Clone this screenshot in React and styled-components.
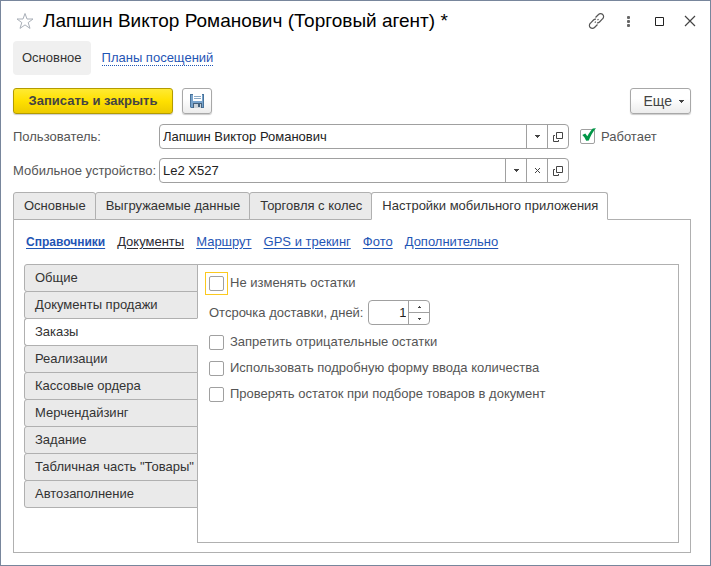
import React, { useState } from "react";
import styled, { createGlobalStyle, css } from "styled-components";

const GlobalStyle = createGlobalStyle`
  * {
    box-sizing: border-box;
  }

  body {
    margin: 0;
    background-color: #fff;
    color: #333;
    font-family: "Liberation Sans", Arial, sans-serif;
    font-size: 13px;
    line-height: 16px;
  }

  button, input {
    font: inherit;
    color: inherit;
    margin: 0;
  }
`;

const pageTabs = ["Основные", "Выгружаемые данные", "Торговля с колес", "Настройки мобильного приложения"];

const sectionLinks = ["Справочники", "Документы", "Маршрут", "GPS и трекинг", "Фото", "Дополнительно"];

const sideTabs = [
  "Общие",
  "Документы продажи",
  "Заказы",
  "Реализации",
  "Кассовые ордера",
  "Мерчендайзинг",
  "Задание",
  'Табличная часть "Товары"',
  "Автозаполнение",
];

const OpenIcon = () => (
  <svg width="10" height="10" viewBox="0 0 10 10" fill="none" stroke="#444" aria-hidden="true">
    <path d="M3.5 .5h6v6h-6zM2 3.5H.5v6h5V8" />
  </svg>
);

const ArrowIcon = () => (
  <svg width="5" height="3" viewBox="0 0 5 3" fill="#444" aria-hidden="true">
    <path d="M0 0h5v1H4v1H3v1H2V2H1V1H0z" />
  </svg>
);

const Check = ({ label, defaultChecked, focused }) => (
  <CheckLabel>
    <CheckFrame $focused={focused}>
      <CheckInput type="checkbox" defaultChecked={defaultChecked} />
      <svg width="15" height="15" viewBox="0 0 15 15" fill="#009646" aria-hidden="true">
        <path d="M2.300 6L5.300 4.500L7.300 7.200C9 4 11 1.500 12.800 -.5L16 -.8C12.800 2.500 10.500 7 8.800 11.500L6.200 11.800C5.200 9.500 4 7.500 2.300 6z" />
      </svg>
    </CheckFrame>
    {label}
  </CheckLabel>
);

const App = () => {
  const [days, setDays] = useState(1);
  const [page, setPage] = useState(3);
  const [side, setSide] = useState(2);

  return (
    <>
      <GlobalStyle />
      <Window>
        <TitleBar>
          <IconButton aria-label="В избранное">
            <svg width="18" height="18" viewBox="0 0 18 18" fill="none" stroke="#a9afb8">
              <path d="M9 1.500l2 5.500h6l-4.800 3.600 1.800 5.800-5-3.500-5 3.500 1.800-5.800L1 7h6z" />
            </svg>
          </IconButton>
          <Title>Лапшин Виктор Романович (Торговый агент) *</Title>
          <WindowButtons>
            <IconButton aria-label="Ссылка">
              <svg width="18" height="18" viewBox="0 0 18 18" fill="none" stroke="#555" strokeWidth="1.2">
                <path d="M7.500 5.500L10.500 2.500a2.900 2.900 0 0 1 4.200 0 2.900 2.900 0 0 1 0 4.200L11.500 10a2.900 2.900 0 0 1-2.500.8M9.500 12.500l-3 3a2.900 2.900 0 0 1-4.200 0 2.900 2.900 0 0 1 0-4.200L5.500 8a2.900 2.900 0 0 1 2.500-.8M6.800 10.700l1-1M9.500 8.200l1-1" />
              </svg>
            </IconButton>
            <IconButton aria-label="Меню">
              <svg width="18" height="18" viewBox="0 0 18 18" fill="#666">
                <rect x="8" y="4" width="3" height="3" rx="1" />
                <rect x="8" y="8" width="3" height="3" rx="1" />
                <rect x="8" y="12" width="3" height="3" rx="1" />
              </svg>
            </IconButton>
            <IconButton aria-label="Развернуть">
              <svg width="18" height="18" viewBox="0 0 18 18" fill="none" stroke="#222">
                <path d="M5.500 5.500h8v8h-8z" />
              </svg>
            </IconButton>
            <IconButton aria-label="Закрыть">
              <svg width="18" height="18" viewBox="0 0 18 18" fill="none" stroke="#444" strokeWidth="1.2">
                <path d="M4 4l10 10M14 4L4 14" />
              </svg>
            </IconButton>
          </WindowButtons>
        </TitleBar>

        <Body>
          <Nav>
            <NavCurrent href="#main">Основное</NavCurrent>
            <NavLink href="#plans">Планы посещений</NavLink>
          </Nav>

          <Commands>
            <PrimaryButton>Записать и закрыть</PrimaryButton>
            <SaveButton aria-label="Записать">
              <svg width="14" height="14" viewBox="0 0 14 14">
                <path d="M0 0h14v14H1l-1-1z" fill="#48749c" />
                <path d="M1 1h12v12H1z" fill="#78a3cc" />
                <path d="M3 0h9v7H3z" fill="#fff" />
                <path d="M4 2h7v1H4zM4 4h7v1H4z" fill="#8ba9c4" />
                <path d="M3 9h9v5H3z" fill="#44617c" />
                <path d="M4 10h7v4H4z" fill="#cbd3da" />
                <path d="M8 10h2v3H8z" fill="#44617c" />
              </svg>
            </SaveButton>
            <MoreButton>
              Еще <ArrowIcon />
            </MoreButton>
          </Commands>

          <Form>
            <label htmlFor="user">Пользователь:</label>
            <Field>
              <FieldInput id="user" defaultValue="Лапшин Виктор Романович" />
              <FieldButton aria-label="Выбрать"><ArrowIcon /></FieldButton>
              <FieldButton aria-label="Открыть"><OpenIcon /></FieldButton>
            </Field>
            <Check label="Работает" defaultChecked />

            <label htmlFor="device">Мобильное устройство:</label>
            <Field>
              <FieldInput id="device" defaultValue="Le2 X527" />
              <FieldButton aria-label="Выбрать"><ArrowIcon /></FieldButton>
              <FieldButton aria-label="Очистить">
                <svg width="5" height="5" viewBox="0 0 5 5" stroke="#444">
                  <path d="M0 0l5 5M5 0L0 5" />
                </svg>
              </FieldButton>
              <FieldButton aria-label="Открыть"><OpenIcon /></FieldButton>
            </Field>
          </Form>

          <Tabs role="tablist">
            {pageTabs.map((name, i) => (
              <Tab key={name} role="tab" aria-selected={i === page} $active={i === page} onClick={() => setPage(i)}>
                {name}
              </Tab>
            ))}
          </Tabs>

          <Panel>
            <Sections>
              {sectionLinks.map((name, i) => (
                <SectionLink key={name} href={`#section-${i}`} $current={i === 0} $dark={i === 1}>
                  {name}
                </SectionLink>
              ))}
            </Sections>

            <Split>
              <SideTabs role="tablist" aria-orientation="vertical">
                {sideTabs.map((name, i) => (
                  <SideTab key={name} role="tab" aria-selected={i === side} $active={i === side} onClick={() => setSide(i)}>
                    {name}
                  </SideTab>
                ))}
              </SideTabs>

              <Settings>
                <Check label="Не изменять остатки" focused />
                <DaysRow>
                  <label htmlFor="days">Отсрочка доставки, дней:</label>
                  <Spinner>
                    <SpinnerInput
                      id="days"
                      inputMode="numeric"
                      value={days}
                      onChange={(e) => setDays(Number(e.target.value) || 0)}
                    />
                    <SpinnerButtons>
                      <SpinnerButton aria-label="Больше" onClick={() => setDays(days + 1)}>
                        <svg width="3" height="2" viewBox="0 0 3 2" fill="#444"><path d="M1 0h1v1h1v1H0V1h1z" /></svg>
                      </SpinnerButton>
                      <SpinnerButton aria-label="Меньше" onClick={() => setDays(Math.max(0, days - 1))}>
                        <svg width="3" height="2" viewBox="0 0 3 2" fill="#444"><path d="M0 0h3v1H2v1H1V1H0z" /></svg>
                      </SpinnerButton>
                    </SpinnerButtons>
                  </Spinner>
                </DaysRow>
                <CheckList>
                  <Check label="Запретить отрицательные остатки" />
                  <Check label="Использовать подробную форму ввода количества" />
                  <Check label="Проверять остаток при подборе товаров в документ" />
                </CheckList>
              </Settings>
            </Split>
          </Panel>
        </Body>
      </Window>
    </>
  );
};

const Window = styled.main`
  display: flex;
  flex-direction: column;
  min-height: 100vh;
  border: 1px solid #78869c;
`;

const TitleBar = styled.header`
  display: flex;
  align-items: center;
  height: 40px;
  padding: 0 11px 0 15px;
`;

const Title = styled.h1`
  flex: 1;
  margin: 0 0 0 9px;
  color: #000;
  font-size: 19px;
  font-weight: normal;
  line-height: 24px;
  white-space: nowrap;
`;

const WindowButtons = styled.div`
  display: flex;
  gap: 13px;
`;

const IconButton = styled.button`
  display: flex;
  padding: 0;
  border: 0;
  background: none;
`;

const Body = styled.div`
  display: flex;
  flex: 1;
  flex-direction: column;
  padding: 0 19px 12px 12px;
`;

const Nav = styled.nav`
  display: flex;
  align-items: center;
  gap: 11px;
`;

const NavCurrent = styled.a`
  padding: 9px;
  border-radius: 4px;
  background-color: #f0f0f0;
  color: #333;
  text-decoration: none;
`;

const NavLink = styled.a`
  border-bottom: 1px dotted #1f55b5;
  color: #1f55b5;
  line-height: 14px;
  text-decoration: none;
`;

const Commands = styled.div`
  display: flex;
  margin-top: 13px;
`;

const buttonBase = css`
  display: flex;
  align-items: center;
  justify-content: center;
  height: 26px;
  border: 1px solid #a8a8a8;
  border-radius: 3px;
  background: linear-gradient(#fff 40%, #ececec);
  box-shadow: 0 1px 1px #ccc;
  color: #444;
`;

const PrimaryButton = styled.button`
  ${buttonBase}
  min-width: 160px;
  padding: 0 12px;
  border-color: #b39b00;
  background: linear-gradient(#ffea33, #ffe000 50%, #edcb00);
  font-weight: bold;
`;

const SaveButton = styled.button`
  ${buttonBase}
  width: 30px;
  margin-left: 9px;
  padding: 0;
`;

const MoreButton = styled.button`
  ${buttonBase}
  gap: 7px;
  margin-left: auto;
  padding: 0 6px 0 13px;
  font-size: 14px;
`;

const Form = styled.div`
  display: grid;
  grid-template-columns: 146px minmax(0, 410px) auto;
  justify-content: start;
  align-items: center;
  row-gap: 9px;
  margin-top: 10px;
  color: #555;
  white-space: nowrap;

  > label:nth-child(3) {
    margin-left: 11px;
  }
`;

const Field = styled.div`
  display: flex;
  height: 25px;
  overflow: hidden;
  border: 1px solid #a0a0a0;
  border-radius: 4px;
`;

const FieldInput = styled.input`
  flex: 1;
  min-width: 0;
  padding: 0 3px;
  border: 0;
  outline: 0;
  background: none;
  color: #222;
`;

const FieldButton = styled.button`
  display: flex;
  align-items: center;
  justify-content: center;
  width: 21px;
  padding: 0;
  border: 0;
  border-left: 1px solid #a0a0a0;
  background: none;
`;

const CheckLabel = styled.label`
  display: flex;
  align-items: center;
  gap: 6px;
`;

const CheckFrame = styled.span`
  position: relative;
  display: flex;
  outline: ${({ $focused }) => ($focused ? "1px solid #fbc91f" : "none")};
  outline-offset: 3px;

  svg {
    position: absolute;
    inset: 0;
    overflow: visible;
    visibility: hidden;
    pointer-events: none;
  }

  input:checked + svg {
    visibility: visible;
  }
`;

const CheckInput = styled.input`
  width: 15px;
  height: 15px;
  border: 1px solid #a0a0a0;
  border-radius: 2px;
  outline: 0;
  background-color: #fff;
  appearance: none;
`;

const Tabs = styled.div`
  display: flex;
  margin-top: 9px;
`;

const Tab = styled.button`
  height: 28px;
  margin-bottom: -1px;
  padding: 0 9px 0 10px;
  border: 1px solid #b0b0b0;
  border-bottom-color: ${({ $active }) => ($active ? "#fff" : "#b0b0b0")};
  border-radius: 3px 3px 0 0;
  background-color: ${({ $active }) => ($active ? "#fff" : "#eaeaea")};
  white-space: nowrap;
  z-index: 1;

  & + & {
    margin-left: -1px;
  }
`;

const Panel = styled.section`
  display: flex;
  flex: 1;
  flex-direction: column;
  padding: 14px 11px 9px 10px;
  border: 1px solid #b0b0b0;
`;

const Sections = styled.nav`
  display: flex;
  gap: 12px;
  padding-left: 2px;
`;

const SectionLink = styled.a`
  color: ${({ $dark }) => ($dark ? "#2b2b33" : "#1f55b5")};
  font-size: ${({ $current }) => ($current ? "12px" : "13px")};
  font-weight: ${({ $current }) => ($current ? "bold" : "normal")};
  text-decoration: underline;
  text-underline-offset: 2px;
`;

const Split = styled.div`
  display: flex;
  flex: 1;
  margin-top: 14px;
`;

const SideTabs = styled.div`
  display: flex;
  flex-direction: column;
  width: 174px;
  margin-right: -1px;
`;

const SideTab = styled.button`
  height: 28px;
  margin-bottom: -1px;
  padding: 0 0 0 10px;
  border: 1px solid #b0b0b0;
  border-right-color: ${({ $active }) => ($active ? "#fff" : "#b0b0b0")};
  border-radius: 3px 0 0 3px;
  background-color: ${({ $active }) => ($active ? "#fff" : "#eaeaea")};
  text-align: left;
  white-space: nowrap;
  z-index: 1;
`;

const Settings = styled.div`
  flex: 1;
  padding: 10px 11px;
  border: 1px solid #b0b0b0;
  color: #555;
`;

const DaysRow = styled.div`
  display: flex;
  align-items: center;
  gap: 5px;
  margin: 9px 0;
`;

const Spinner = styled.div`
  display: flex;
  width: 62px;
  height: 25px;
  overflow: hidden;
  border: 1px solid #a0a0a0;
  border-radius: 4px;
`;

const SpinnerInput = styled(FieldInput)`
  padding: 0 2px;
  text-align: right;
`;

const SpinnerButtons = styled.div`
  display: flex;
  flex-direction: column;
  width: 21px;
  border-left: 1px solid #a0a0a0;
`;

const SpinnerButton = styled.button`
  display: flex;
  flex: 1;
  align-items: center;
  justify-content: center;
  padding: 0;
  border: 0;
  background: none;

  & + & {
    border-top: 1px solid #a0a0a0;
  }
`;

const CheckList = styled.div`
  display: grid;
  gap: 10px;
`;

export default App;
